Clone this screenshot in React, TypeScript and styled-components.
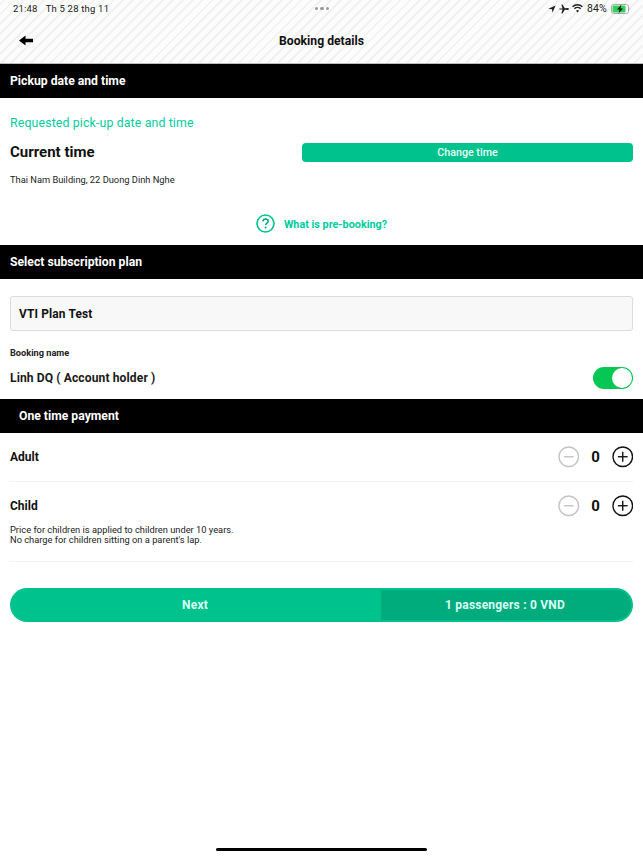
import React from "react";
import styled, { createGlobalStyle } from "styled-components";

const Global = createGlobalStyle`
  html, body { margin: 0; padding: 0; background: #fff; }
  body { font-family: Roboto, "Liberation Sans", sans-serif; color: #111; }
`;

const Page = styled.div`
  width: 643px;
  height: 857px;
  position: relative;
  overflow: hidden;
  background: #fff;
`;

const TopArea = styled.div`
  box-sizing: border-box;
  border-bottom: 1px solid #bdbdbd;
  height: 64px;
  background: repeating-linear-gradient(
    -45deg,
    #fcfcfc 0 5px,
    #f1f1f1 5px 7px
  );
  display: flex;
  flex-direction: column;
`;

const StatusBar = styled.div`
  height: 17px;
  padding: 0 12px 0 13px;
  display: grid;
  grid-template-columns: 1fr auto 1fr;
  align-items: center;
  font-size: 9.5px;
  color: #222;
`;

const StatusLeft = styled.div`
  display: flex;
  gap: 8px;
  letter-spacing: 0.2px;
`;

const Dots = styled.div`
  display: flex;
  gap: 2px;
`;

const Dot = styled.span`
  width: 3.5px;
  height: 3.5px;
  border-radius: 50%;
  background: #999;
`;

const StatusRight = styled.div`
  display: flex;
  justify-content: flex-end;
  align-items: center;
  gap: 3px;
  font-size: 10.5px;
  letter-spacing: 0.2px;
`;

const BatteryPercent = styled.span`
  margin: 0 1px;
`;

const NavBar = styled.div`
  flex: 1;
  position: relative;
  display: flex;
  align-items: center;
  justify-content: center;
  padding-top: 2px;
`;

const BackButton = styled.button`
  position: absolute;
  left: 19px;
  top: 18px;
  padding: 0;
  border: 0;
  background: none;
  display: flex;
`;

const NavTitle = styled.div`
  font-size: 12.2px;
  font-weight: 700;
  color: #111;
`;

const SectionBar = styled.div<{ $inset?: boolean }>`
  height: 34px;
  box-sizing: border-box;
  padding-bottom: 1px;
  background: #000;
  color: #fff;
  display: flex;
  align-items: center;
  padding-left: ${(p) => (p.$inset ? 19 : 10)}px;
  font-size: 12.2px;
  font-weight: 700;
`;

const PickupBlock = styled.div`
  height: 147px;
  padding: 18px 10px 0;
  box-sizing: border-box;
  display: flex;
  flex-direction: column;
`;

const GreenLabel = styled.div`
  font-size: 12.3px;
  line-height: 15px;
  color: #00cc9f;
  letter-spacing: 0.15px;
`;

const TimeRow = styled.div`
  margin-top: 11px;
  display: flex;
  justify-content: space-between;
  align-items: center;
`;

const CurrentTime = styled.div`
  font-size: 15px;
  font-weight: 700;
  line-height: 20px;
`;

const ChangeTime = styled.button`
  width: 331px;
  height: 19px;
  padding: 0;
  border: 0;
  border-radius: 4px;
  background: #00c28c;
  color: #eafff8;
  font-family: inherit;
  font-size: 10.7px;
  font-weight: 500;
`;

const Address = styled.div`
  margin-top: 12px;
  font-size: 9.3px;
  line-height: 12px;
  color: #222;
`;

const HelpLink = styled.div`
  margin-top: 28px;
  display: flex;
  justify-content: center;
  align-items: center;
  gap: 9px;
  color: #00cc9f;
  font-size: 10.8px;
  font-weight: 700;
`;

const HelpText = styled.span`
  padding-top: 2px;
`;

const PlanBlock = styled.div`
  height: 120px;
  padding: 17px 10px 0;
  box-sizing: border-box;
`;

const PlanField = styled.div`
  height: 35px;
  box-sizing: border-box;
  border: 1px solid #dcdcdc;
  border-radius: 3px;
  background: #f8f8f8;
  display: flex;
  align-items: center;
  padding-left: 8px;
  font-size: 11.9px;
  font-weight: 700;
  letter-spacing: 0.15px;
`;

const SmallLabel = styled.div`
  margin-top: 16px;
  font-size: 9.2px;
  line-height: 11px;
  font-weight: 700;
  color: #222;
`;

const HolderRow = styled.div`
  margin-top: 8px;
  display: flex;
  justify-content: space-between;
  align-items: center;
  height: 24px;
`;

const HolderName = styled.div`
  padding-bottom: 1px;
  font-size: 12.1px;
  font-weight: 700;
  color: #1a1a1a;
  letter-spacing: 0.1px;
`;

const Switch = styled.div`
  width: 40px;
  height: 22px;
  border-radius: 11px;
  background: #05c754;
  position: relative;
`;

const Knob = styled.span`
  position: absolute;
  right: 1px;
  top: 1px;
  width: 20px;
  height: 20px;
  border-radius: 50%;
  background: #fff;
`;

const PassengerList = styled.div`
  padding: 0 10px;
`;

const AdultRow = styled.div`
  height: 48px;
  border-bottom: 1px solid #f2f2f2;
  display: flex;
  align-items: center;
  justify-content: space-between;
`;

const ChildRow = styled.div`
  height: 66px;
  border-bottom: 1px solid #f2f2f2;
  padding-top: 13px;
`;

const ChildHead = styled.div`
  display: flex;
  align-items: center;
  justify-content: space-between;
  height: 21.5px;
`;

const RowLabel = styled.div<{ $lowered?: boolean }>`
  padding: ${(p) => (p.$lowered ? "1px 0 0" : "0 0 1px")};
  font-size: 12px;
  font-weight: 700;
`;

const Counter = styled.div`
  display: flex;
  align-items: center;
`;

const CountValue = styled.div`
  width: 32px;
  text-align: center;
  font-size: 15px;
  font-weight: 700;
`;

const Note = styled.div`
  margin-top: 8px;
  font-size: 9.3px;
  line-height: 10px;
  color: #222;
`;

const FooterButton = styled.div`
  margin: 26px 10px 0;
  height: 34px;
  border-radius: 17px;
  background: #00c28c;
  display: grid;
  grid-template-columns: 371px 1fr;
  overflow: hidden;
  color: #dafff4;
  font-size: 12px;
  font-weight: 700;
  letter-spacing: 0.2px;
`;

const NextPart = styled.div`
  display: flex;
  align-items: center;
  justify-content: center;
  padding-right: 1px;
`;

const TotalPart = styled.div`
  display: flex;
  align-items: center;
  justify-content: center;
  margin: 2px 2px 2px 0;
  border-radius: 0 15px 15px 0;
  background: #00ab7c;
  padding-right: 2px;
`;

const HomeIndicator = styled.div`
  position: absolute;
  left: 216px;
  bottom: 6px;
  width: 211px;
  height: 3px;
  border-radius: 2px;
  background: #000;
`;

const BackArrow = () => (
  <svg width="14" height="11" viewBox="0 0 14 12" preserveAspectRatio="none">
    <path d="M0 6 6.5 0.5V4H14V8H6.5V11.5Z" fill="#000" />
  </svg>
);

const LocationIcon = () => (
  <svg width="8" height="8" viewBox="0 0 10 10">
    <path d="M9.5 0.5 0.5 4.6 5 5.2 5.6 9.6Z" fill="#222" />
  </svg>
);

const PlaneIcon = () => (
  <svg width="10" height="10" viewBox="0 0 12 10" preserveAspectRatio="none">
    <path d="M0 5 1 4.5 2.4 4.6 4.2 4.4 2.8 0.4H4.2L7 4.2 10.5 4.1C11.5 4.2 12 4.6 12 5S11.5 5.8 10.5 5.9L7 5.8 4.2 9.6H2.8L4.2 5.6 2.4 5.4 1 5.5Z" fill="#222" />
  </svg>
);

const WifiIcon = () => (
  <svg width="11" height="8.5" viewBox="0 0 12 9" fill="none" stroke="#222" preserveAspectRatio="none">
    <path d="M0.7 3A7.6 7.6 0 0 1 11.3 3" strokeWidth="1.5" />
    <path d="M2.6 5A4.9 4.9 0 0 1 9.4 5" strokeWidth="1.5" />
    <path d="M6 9 4.4 7.1A2.3 2.3 0 0 1 7.6 7.1Z" fill="#222" stroke="none" />
  </svg>
);

const BatteryIcon = () => (
  <svg width="20" height="10" viewBox="0 0 20 10">
    <rect x="0.5" y="0.5" width="17" height="9" rx="2.2" fill="#fff" stroke="#aaa" />
    <rect x="1.5" y="1.5" width="13" height="7" rx="1.2" fill="#2fd158" />
    <path d="M18.6 3.4C19.4 3.7 19.4 6.3 18.6 6.6Z" fill="#aaa" />
    <path d="M10.5 0.5 6 5.6H8.6L7.5 9.5 12 4.4H9.4Z" fill="#111" />
  </svg>
);

const HelpIcon = () => (
  <svg width="19" height="19" viewBox="0 0 19 19" fill="none">
    <circle cx="9.5" cy="9.5" r="8.5" stroke="#00c28c" strokeWidth="1.6" />
    <path d="M6.9 7.4C7 5.9 8.1 5 9.6 5 11.1 5 12.2 6 12.2 7.3 12.2 8.9 9.6 9.2 9.6 11" stroke="#00a87c" strokeWidth="1.5" />
    <circle cx="9.6" cy="13.6" r="1" fill="#00a87c" />
  </svg>
);

const RoundButton = ({ kind }: { kind: "minus" | "plus" }) => {
  const color = kind === "plus" ? "#111" : "#c4c4c4";
  return (
    <svg width="21.5" height="21.5" viewBox="0 0 22 22" fill="none" stroke={color}>
      <circle cx="11" cy="11" r="10" strokeWidth={kind === "plus" ? 1.4 : 1.5} />
      <path d="M6 11H16" strokeWidth="1.4" />
      {kind === "plus" && <path d="M11 6V16" strokeWidth="1.4" />}
    </svg>
  );
};

const PassengerCounter = () => (
  <Counter>
    <RoundButton kind="minus" />
    <CountValue>0</CountValue>
    <RoundButton kind="plus" />
  </Counter>
);

export default function App() {
  return (
    <Page>
      <Global />
      <TopArea>
        <StatusBar>
          <StatusLeft>
            <span>21:48</span>
            <span>Th 5 28 thg 11</span>
          </StatusLeft>
          <Dots>
            <Dot />
            <Dot />
            <Dot />
          </Dots>
          <StatusRight>
            <LocationIcon />
            <PlaneIcon />
            <WifiIcon />
            <BatteryPercent>84%</BatteryPercent>
            <BatteryIcon />
          </StatusRight>
        </StatusBar>
        <NavBar>
          <BackButton>
            <BackArrow />
          </BackButton>
          <NavTitle>Booking details</NavTitle>
        </NavBar>
      </TopArea>

      <SectionBar>Pickup date and time</SectionBar>
      <PickupBlock>
        <GreenLabel>Requested pick-up date and time</GreenLabel>
        <TimeRow>
          <CurrentTime>Current time</CurrentTime>
          <ChangeTime>Change time</ChangeTime>
        </TimeRow>
        <Address>Thai Nam Building, 22 Duong Dinh Nghe</Address>
        <HelpLink>
          <HelpIcon />
          <HelpText>What is pre-booking?</HelpText>
        </HelpLink>
      </PickupBlock>

      <SectionBar>Select subscription plan</SectionBar>
      <PlanBlock>
        <PlanField>VTI Plan Test</PlanField>
        <SmallLabel>Booking name</SmallLabel>
        <HolderRow>
          <HolderName>Linh DQ ( Account holder )</HolderName>
          <Switch>
            <Knob />
          </Switch>
        </HolderRow>
      </PlanBlock>

      <SectionBar $inset>One time payment</SectionBar>
      <PassengerList>
        <AdultRow>
          <RowLabel>Adult</RowLabel>
          <PassengerCounter />
        </AdultRow>
        <ChildRow>
          <ChildHead>
            <RowLabel $lowered>Child</RowLabel>
            <PassengerCounter />
          </ChildHead>
          <Note>
            Price for children is applied to children under 10 years.
            <br />
            No charge for children sitting on a parent's lap.
          </Note>
        </ChildRow>
      </PassengerList>

      <FooterButton>
        <NextPart>Next</NextPart>
        <TotalPart>1 passengers : 0 VND</TotalPart>
      </FooterButton>
      <HomeIndicator />
    </Page>
  );
}
